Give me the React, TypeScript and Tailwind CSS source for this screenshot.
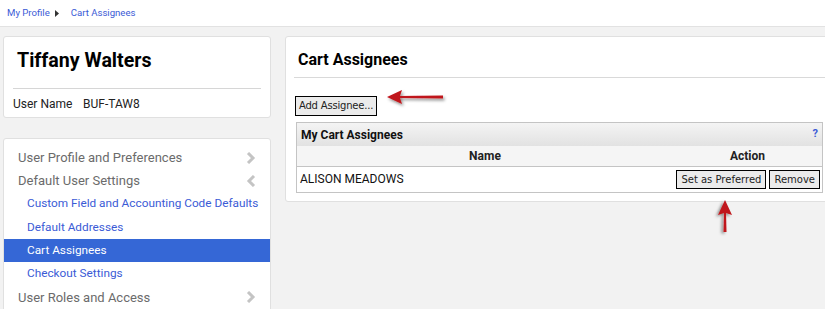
import React from "react";

const font = { fontFamily: "Roboto, 'Liberation Sans', Arial, sans-serif" };
const btnFont = { fontFamily: "'DejaVu Sans', Verdana, sans-serif", fontSize: "10px" };

function Chevron({ dir }: { dir: "right" | "left" }) {
  return (
    <svg width="10" height="12" viewBox="0 0 10 12" className="shrink-0">
      <polyline
        points={dir === "right" ? "2,1 7,6 2,11" : "8,1 3,6 8,11"}
        fill="none"
        stroke="#c4c4c4"
        strokeWidth="3"
      />
    </svg>
  );
}

function RedArrow({ className, rotate, len }: { className: string; rotate: number; len: number }) {
  const id = `sh${rotate}`;
  return (
    <svg width={len + 6} height="22" viewBox={`0 0 ${len + 6} 22`} className={className} style={{ transform: `rotate(${rotate}deg)`, transformOrigin: "0 0" }}>
      <defs>
        <filter id={id} x="-20%" y="-50%" width="140%" height="200%">
          <feDropShadow dx="1.5" dy="2" stdDeviation="1.5" floodColor="#000" floodOpacity="0.45" />
        </filter>
      </defs>
      <g filter={`url(#${id})`}>
        <polygon points={`2,9 17,2 15,8 ${len},7.5 ${len},10.5 15,10 17,16`} fill="#c0161c" />
      </g>
    </svg>
  );
}

export default function App() {
  const nav = [
    { label: "User Profile and Preferences", kind: "main", chev: "right" },
    { label: "Default User Settings", kind: "main", chev: "left" },
    { label: "Custom Field and Accounting Code Defaults", kind: "sub" },
    { label: "Default Addresses", kind: "sub" },
    { label: "Cart Assignees", kind: "active" },
    { label: "Checkout Settings", kind: "sub" },
    { label: "User Roles and Access", kind: "main", chev: "right" },
  ];
  return (
    <div className="w-[825px] h-[309px] bg-[#f2f2f2] overflow-hidden relative" style={font}>
      <div className="h-[27px] bg-white border-b border-[#e2e2e2] flex items-center pl-[7px] text-[9.6px] text-[#3b5bd6]">
        <span>My Profile</span>
        <svg width="4" height="7" viewBox="0 0 4 7" className="ml-[5px] mr-[12px]">
          <polygon points="0,0 4,3.5 0,7" fill="#333" />
        </svg>
        <span>Cart Assignees</span>
      </div>
      <div className="flex pt-[9px] pl-[3px] gap-[14px]">
        <div className="w-[268px] flex flex-col gap-[20px] shrink-0">
          <div className="h-[82px] bg-white border border-[#e0e0e0] rounded-[3px] px-[9px]">
            <div className="pl-[4px] pt-[12px] h-[52px] text-[19.6px] font-bold text-black leading-[24px] border-b border-[#d6d6d6]">
              Tiffany Walters
            </div>
            <div className="pt-[6px] text-[12px] text-[#222] flex">
              <span className="w-[70px]">User Name</span>
              <span>BUF-TAW8</span>
            </div>
          </div>
          <div className="h-[200px] bg-white border border-[#e0e0e0] rounded-[3px] pt-[7px]">
            {nav.map((n) => (
              <div
                key={n.label}
                className={
                  "h-[23.3px] flex items-center justify-between pr-[14px] whitespace-nowrap " +
                  (n.kind === "main"
                    ? "pl-[14px] text-[#6b6b6b] text-[13px]"
                    : n.kind === "sub"
                    ? "pl-[23px] text-[#3b5bd6] text-[11.8px]"
                    : "pl-[23px] bg-[#3567d6] text-white text-[11.8px]")
                }
              >
                <span>{n.label}</span>
                {n.chev && <Chevron dir={n.chev as "right" | "left"} />}
              </div>
            ))}
          </div>
        </div>
        <div className="w-[560px] shrink-0 self-start h-[166px] bg-white border border-[#e0e0e0] rounded-[3px] pl-[8px]">
          <div className="h-[41px] border-b border-[#d9d9d9] pl-[4px] pt-[13px] text-[16px] font-bold text-black leading-[20px]">
            Cart Assignees
          </div>
          <div className="pt-[14px] pl-[1px]">
            <button className="h-[20px] px-[3px] border border-black bg-[#ebebeb] text-[#222] leading-none tracking-[-0.2px]" style={btnFont}>
              Add Assignee...
            </button>
          </div>
          <div className="mt-[6px] ml-[2px] w-[527px] border border-[#c4c4c4]">
            <div className="h-[23px] bg-gradient-to-b from-[#f4f4f4] to-[#e2e2e2] flex items-center justify-between px-[4px] text-[12px] font-bold text-[#111]">
              <span>My Cart Assignees</span>
              <span className="text-[#3b5bd6] text-[11px]">?</span>
            </div>
            <div className="h-[21px] bg-[#f5f5f5] flex items-center text-[12px] font-bold text-[#222] border-b border-[#c4c4c4]">
              <span className="w-[376px] text-center">Name</span>
              <span className="flex-1 text-center">Action</span>
            </div>
            <div className="h-[25px] bg-white flex items-start justify-between pl-[3px] pr-[2px] pt-[3px] text-[12px] text-[#111]">
              <span>ALISON MEADOWS</span>
              <div className="flex gap-[3px]">
                <button className="h-[19px] px-[4px] border border-black bg-[#ebebeb] text-[#222] leading-none" style={btnFont}>
                  Set as Preferred
                </button>
                <button className="h-[19px] px-[4px] border border-black bg-[#ebebeb] text-[#222] leading-none" style={btnFont}>
                  Remove
                </button>
              </div>
            </div>
          </div>
        </div>
      </div>
      <RedArrow className="absolute left-[385px] top-[88px]" rotate={0} len={58} />
      <RedArrow className="absolute left-[734px] top-[198px]" rotate={90} len={34} />
    </div>
  );
}
